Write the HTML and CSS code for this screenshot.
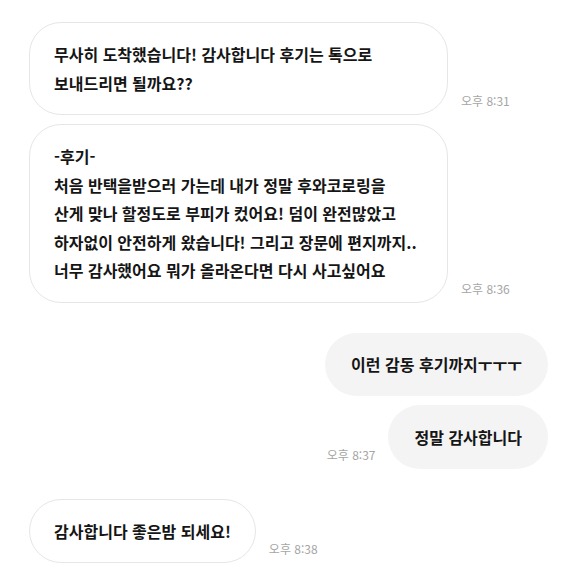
FILE: index.html
```html
<!DOCTYPE html>
<html lang="ko">
<head>
    <meta charset="UTF-8">
    <meta name="viewport" content="width=device-width, initial-scale=1.0">
    <title>채팅</title>
    <link rel="stylesheet" href="styles.css">
</head>
<body>
    <div class="chat">
        <div class="row left first">
            <div class="bubble in wide">무사히 도착했습니다! 감사합니다 후기는 톡으로<br>보내드리면 될까요??</div>
            <span class="time">오후 8:31</span>
        </div>
        <div class="row left">
            <div class="bubble in wide">-후기-<br>처음 반택을받으러 가는데 내가 정말 후와코로링을<br>산게 맞나 할정도로 부피가 컸어요! 덤이 완전많았고<br>하자없이 안전하게 왔습니다! 그리고 장문에 편지까지..<br>너무 감사했어요 뭐가 올라온다면 다시 사고싶어요</div>
            <span class="time">오후 8:36</span>
        </div>
        <div class="row right gap">
            <div class="bubble out">이런 감동 후기까지ㅜㅜㅜ</div>
        </div>
        <div class="row right">
            <span class="time">오후 8:37</span>
            <div class="bubble out">정말 감사합니다</div>
        </div>
        <div class="row left gap">
            <div class="bubble in">감사합니다 좋은밤 되세요!</div>
            <span class="time">오후 8:38</span>
        </div>
    </div>
</body>
</html>
```

FILE: styles.css
```css
body {
    margin: 0;
    background: #fff;
    font-family: "Noto Sans CJK KR", "Noto Sans", sans-serif;
    color: #151515;
}
.chat {
    display: flex;
    flex-direction: column;
    padding: 22px 28px 0 29px;
}
.row {
    display: flex;
    align-items: flex-end;
    gap: 13px;
    margin-top: 9px;
}
.row.first {
    margin-top: 0;
}
.row.gap {
    margin-top: 30px;
}
.row.right {
    justify-content: flex-end;
}
.bubble {
    font-size: 16px;
    font-weight: 700;
    line-height: 28.5px;
    border-radius: 32px;
    box-sizing: border-box;
}
.bubble.in {
    background: #fff;
    border: 1px solid #e6e6e6;
    padding: 17px 24px;
}
.bubble.wide {
    width: 419px;
}
.bubble.out {
    background: #f4f4f4;
    padding: 17.5px 26px;
}
.time {
    font-size: 12px;
    color: #a5a5a5;
    margin-bottom: 6px;
    white-space: nowrap;
}
```
